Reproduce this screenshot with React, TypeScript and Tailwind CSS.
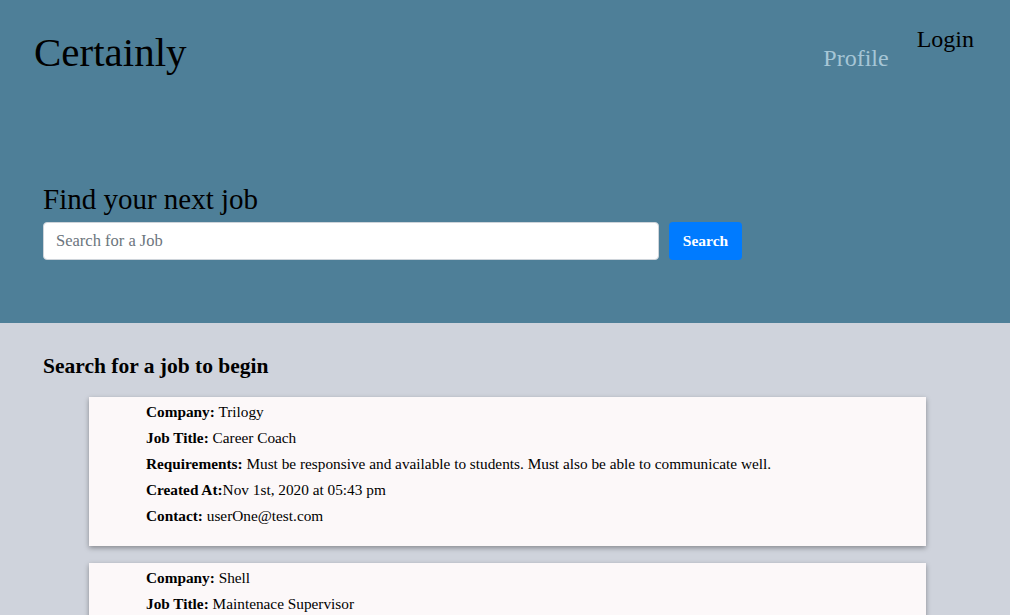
const jobs = [
  {
    company: "Trilogy",
    title: "Career Coach",
    requirements:
      "Must be responsive and available to students. Must also be able to communicate well.",
    created: "Nov 1st, 2020 at 05:43 pm",
    contact: "userOne@test.com",
  },
  {
    company: "Shell",
    title: "Maintenace Supervisor",
    requirements: "Must have experience supervising a maintenance crew.",
    created: "Nov 1st, 2020 at 05:45 pm",
    contact: "userTwo@test.com",
  },
];

function JobCard({ job }: { job: (typeof jobs)[number] }) {
  return (
    <div className="ml-[89px] mb-[17px] w-[837px] bg-[#fcf8f9] pl-[57px] pt-[2px] pb-[17px] text-[15.3px] leading-[26px] text-black shadow-[0_2px_5px_rgba(0,0,0,0.35)]">
      <p>
        <b>Company:</b> {job.company}
      </p>
      <p>
        <b>Job Title:</b> {job.title}
      </p>
      <p>
        <b>Requirements:</b> {job.requirements}
      </p>
      <p>
        <b>Created At:</b>
        {job.created}
      </p>
      <p>
        <b>Contact:</b> {job.contact}
      </p>
    </div>
  );
}

export default function App() {
  return (
    <div
      className="min-h-screen bg-[#cfd3dc]"
      style={{ fontFamily: '"Liberation Serif", "Times New Roman", serif' }}>
      <header className="h-[323px] bg-[#4e7f98]">
        <div className="flex h-[76px] items-start justify-between pl-[34px] pr-[36px]">
          <h1 className="pt-[28px] text-[41px] leading-[48px] text-black">
            Certainly
          </h1>
          <nav className="flex items-start gap-[28px] text-[24px] leading-[29px]">
            <a className="mt-[44px] text-[#a6c6d6]">Profile</a>
            <a className="mt-[25px] text-black">Login</a>
          </nav>
        </div>
        <div className="pl-[43px] pt-[106px]">
          <h2 className="mb-[5px] text-[29px] leading-[35px] text-black">
            Find your next job
          </h2>
          <div className="flex gap-[10px]">
            <input
              className="h-[38px] w-[616px] rounded-[4px] border border-[#ced4da] bg-white px-[12px] text-[16.5px] text-[#495057] placeholder:text-[#6c757d] outline-none"
              placeholder="Search for a Job"
            />
            <button className="h-[38px] w-[73px] rounded-[4px] bg-[#007bff] text-[15.5px] font-bold text-white">
              Search
            </button>
          </div>
        </div>
      </header>
      <main className="pt-[30px]">
        <h3 className="mb-[18px] pl-[43px] text-[21.5px] font-bold leading-[26px] text-black">
          Search for a job to begin
        </h3>
        {jobs.map((j) => (
          <JobCard key={j.company} job={j} />
        ))}
      </main>
    </div>
  );
}
